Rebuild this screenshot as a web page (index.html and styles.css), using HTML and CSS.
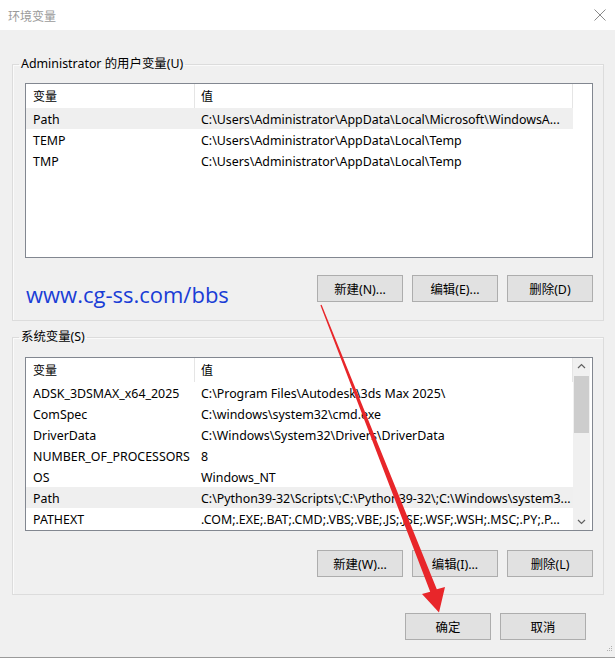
FILE: index.html
```html
<!DOCTYPE html>
<html lang="zh-CN">
<head>
<meta charset="utf-8">
<title>环境变量</title>
<link rel="stylesheet" href="styles.css">
</head>
<body>
<div class="window">
  <div class="titlebar">
    <span class="title">环境变量</span>
    <svg class="close" width="12" height="12" viewBox="0 0 12 12"><path d="M0.5 0.5 L11.5 11.5 M11.5 0.5 L0.5 11.5" stroke="#8a8a8a" stroke-width="1" fill="none"/></svg>
  </div>
  <div class="content">
    <fieldset class="group group-user">
      <legend>Administrator 的用户变量(U)</legend>
      <div class="list list-user">
        <div class="rows">
          <div class="row head"><div class="c1">变量</div><div class="c2">值</div><div class="c3"></div></div>
          <div class="row sel"><div class="c1">Path</div><div class="c2">C:\Users\Administrator\AppData\Local\Microsoft\WindowsA...</div></div>
          <div class="row"><div class="c1">TEMP</div><div class="c2">C:\Users\Administrator\AppData\Local\Temp</div></div>
          <div class="row"><div class="c1">TMP</div><div class="c2">C:\Users\Administrator\AppData\Local\Temp</div></div>
        </div>
      </div>
      <div class="actions">
        <span class="watermark">www.cg-ss.com/bbs</span>
        <div class="btns">
          <button class="btn">新建(N)...</button>
          <button class="btn">编辑(E)...</button>
          <button class="btn">删除(D)</button>
        </div>
      </div>
    </fieldset>

    <fieldset class="group group-sys">
      <legend>系统变量(S)</legend>
      <div class="list list-sys">
        <div class="rows">
          <div class="row head"><div class="c1">变量</div><div class="c2">值</div></div>
          <div class="row"><div class="c1">ADSK_3DSMAX_x64_2025</div><div class="c2">C:\Program Files\Autodesk\3ds Max 2025\</div></div>
          <div class="row"><div class="c1">ComSpec</div><div class="c2">C:\windows\system32\cmd.exe</div></div>
          <div class="row"><div class="c1">DriverData</div><div class="c2">C:\Windows\System32\Drivers\DriverData</div></div>
          <div class="row"><div class="c1">NUMBER_OF_PROCESSORS</div><div class="c2">8</div></div>
          <div class="row"><div class="c1">OS</div><div class="c2">Windows_NT</div></div>
          <div class="row sel"><div class="c1">Path</div><div class="c2">C:\Python39-32\Scripts\;C:\Python39-32\;C:\Windows\system3...</div></div>
          <div class="row"><div class="c1">PATHEXT</div><div class="c2">.COM;.EXE;.BAT;.CMD;.VBS;.VBE;.JS;.JSE;.WSF;.WSH;.MSC;.PY;.P...</div></div>
        </div>
        <div class="scrollbar">
          <svg class="sb-arrow" width="17" height="17" viewBox="0 0 17 17"><path d="M5 10 L8.5 6.5 L12 10" stroke="#606060" stroke-width="1.2" fill="none"/></svg>
          <div class="sb-track"><div class="sb-thumb"></div></div>
          <svg class="sb-arrow" width="17" height="17" viewBox="0 0 17 17"><path d="M5 7 L8.5 10.5 L12 7" stroke="#606060" stroke-width="1.2" fill="none"/></svg>
        </div>
      </div>
      <div class="actions">
        <div class="btns">
          <button class="btn">新建(W)...</button>
          <button class="btn">编辑(I)...</button>
          <button class="btn">删除(L)</button>
        </div>
      </div>
    </fieldset>

    <div class="footer">
      <button class="btn">确定</button>
      <button class="btn">取消</button>
    </div>
  </div>
  <svg class="grip" width="10" height="10" viewBox="0 0 10 10">
    <rect x="8" y="2" width="1" height="1" fill="#b0b0b0"/>
    <rect x="6" y="4" width="1" height="1" fill="#b0b0b0"/>
    <rect x="8" y="4" width="1" height="1" fill="#b0b0b0"/>
    <rect x="4" y="6" width="1" height="1" fill="#b0b0b0"/>
    <rect x="6" y="6" width="1" height="1" fill="#b0b0b0"/>
    <rect x="8" y="6" width="1" height="1" fill="#b0b0b0"/>
  </svg>
</div>
<svg class="arrow" width="615" height="658" viewBox="0 0 615 658">
  <polygon points="320.4,305.2 321.6,304.8 436.8,589.2 445,587 439,612.5 422,594 430.2,591.8" fill="#e8262a"/>
</svg>
</body>
</html>
```

FILE: styles.css
```css
* {
  box-sizing: border-box;
}

html, body {
  margin: 0;
  padding: 0;
}

body {
  width: 615px;
  height: 658px;
  background: #f0f0f0;
  font-family: "Noto Sans", "Noto Sans CJK SC", sans-serif;
  font-size: 12.4px;
  color: #000;
  position: relative;
  overflow: hidden;
}

.window {
  width: 615px;
  height: 658px;
  display: flex;
  flex-direction: column;
  border-bottom: 1px solid #9a9a9a;
  position: relative;
}

.titlebar {
  height: 30px;
  background: #fff;
  display: flex;
  align-items: center;
  justify-content: space-between;
  padding: 0 9px 0 8px;
  flex: none;
}

.title {
  color: #9a9a9a;
  font-family: "Noto Sans CJK SC", sans-serif;
  font-size: 12px;
}

.close {
  display: block;
}

.content {
  flex: 1;
  display: flex;
  flex-direction: column;
}

.group {
  margin: 0 11px 0 12px;
  border: 1px solid #dcdcdc;
  box-shadow: inset 1px 1px 0 #fafafa;
  padding: 11px 10px 18px 12px;
  min-inline-size: 0;
}

.group-user {
  margin-top: 26px;
}

.group-sys {
  margin-top: 8px;
  padding-top: 12px;
  padding-bottom: 17px;
}

.group legend {
  margin-left: -6px;
  padding: 0 2px;
  line-height: 16px;
  font-size: 12.4px;
  font-family: "Noto Sans", "Noto Sans CJK SC", sans-serif;
}

.list {
  border: 1px solid #828790;
  background: #fff;
  display: flex;
  overflow: hidden;
}

.list-user {
  height: 175px;
}

.list-sys {
  height: 174px;
}

.rows {
  flex: none;
  display: flex;
  flex-direction: column;
}

.list-user .rows {
  width: 565px;
}

.row {
  display: flex;
  height: 21px;
  padding-top: 1px;
  align-items: center;
  white-space: nowrap;
}

.row.head {
  height: 24px;
  padding-top: 0;
  align-items: stretch;
}

.row.head > div {
  display: flex;
  align-items: center;
  font-family: "Noto Sans CJK SC", sans-serif;
  font-size: 12px;
  padding-bottom: 1px;
}

.row.sel {
  background: #efefef;
  width: 547px;
}

.c1 {
  width: 169px;
  padding-left: 7px;
  overflow: hidden;
  flex: none;
}

.c2 {
  width: 378px;
  padding-left: 6px;
  overflow: hidden;
  flex: none;
}

.c3 {
  flex: 1;
}

.row.head .c1,
.row.head .c2 {
  border-right: 1px solid #e5e5e5;
}

.scrollbar {
  width: 17px;
  flex: none;
  background: #f0f0f0;
  display: flex;
  flex-direction: column;
}

.sb-arrow {
  display: block;
  flex: none;
}

.sb-track {
  flex: 1;
  padding: 1px 1px;
}

.sb-thumb {
  height: 57px;
  background: #cdcdcd;
}

.actions {
  margin-top: 17px;
  display: flex;
  align-items: flex-start;
  justify-content: space-between;
}

.group-sys .actions {
  margin-top: 19px;
  justify-content: flex-end;
}

.watermark {
  margin-top: 8px;
  margin-bottom: -4px;
  margin-left: 1px;
  font-family: "Open Sans", "Noto Sans", sans-serif;
  font-size: 22px;
  line-height: 22px;
  color: #1a3dd6;
}

.btns {
  display: flex;
  gap: 9px;
}

.btn {
  width: 86px;
  height: 27px;
  padding: 0;
  margin: 0;
  background: #e1e1e1;
  border: 1px solid #adadad;
  border-radius: 0;
  font-family: "Noto Sans", "Noto Sans CJK SC", sans-serif;
  font-size: 12.4px;
  color: #000;
}

.footer {
  margin-top: 18px;
  padding-right: 29px;
  display: flex;
  justify-content: flex-end;
  gap: 9px;
}

.grip {
  position: absolute;
  right: 2px;
  bottom: 3px;
}

.arrow {
  position: absolute;
  left: 0;
  top: 0;
  pointer-events: none;
}
```
